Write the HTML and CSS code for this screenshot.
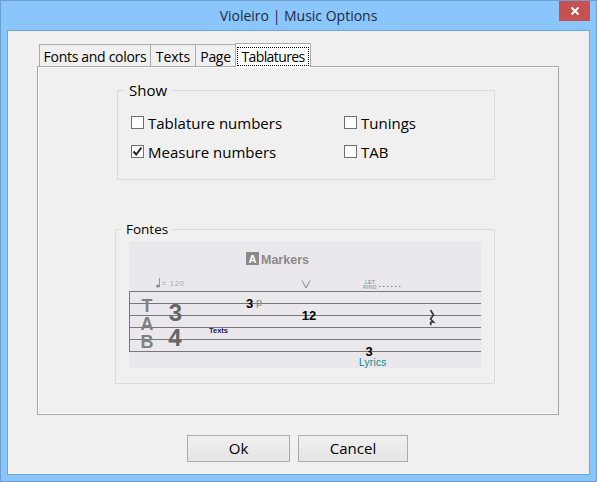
FILE: index.html
```html
<!DOCTYPE html>
<html lang="en">

<head>
  <meta charset="UTF-8">
  <meta name="viewport" content="width=device-width, initial-scale=1.0">
  <title>Violeiro | Music Options</title>
  <link rel="stylesheet" href="styles.css">
</head>

<body>
  <div class="window">
    <div class="titlebar">
      <span class="title">Violeiro | Music Options</span>
      <div class="close-button">
        <svg width="10" height="10" viewBox="0 0 10 10">
          <path d="M1.5 1.5 L8.5 8.5 M8.5 1.5 L1.5 8.5" stroke="#fff" stroke-width="2" fill="none"/>
        </svg>
      </div>
    </div>

    <div class="client">
      <div class="tabs">
        <div class="tab tab-fonts">Fonts and colors</div>
        <div class="tab tab-texts">Texts</div>
        <div class="tab tab-page">Page</div>
        <div class="tab tab-active"><span class="tab-focus">Tablatures</span></div>
      </div>

      <div class="pane">
        <fieldset class="group group-show">
          <legend>Show</legend>
          <div class="options">
            <div class="option"><span class="box"></span>Tablature numbers</div>
            <div class="option"><span class="box"></span>Tunings</div>
            <div class="option">
              <span class="box">
                <svg width="11" height="11" viewBox="0 0 11 11">
                  <path d="M1.5 5.5 L4.2 8.5 L9.5 1.5" stroke="#222" stroke-width="2" fill="none"/>
                </svg>
              </span>Measure numbers
            </div>
            <div class="option"><span class="box"></span>TAB</div>
          </div>
        </fieldset>

        <fieldset class="group group-fonts">
          <legend>Fontes</legend>
          <svg class="score" width="352" height="127" viewBox="0 0 352 127">
            <!-- staff -->
            <g stroke="#77767a" stroke-width="1">
              <path d="M0 50.5 H352 M0 62.5 H352 M0 74.5 H352 M0 86.5 H352 M0 98.5 H352 M0 110.5 H352"/>
              <path d="M0.5 50 V111"/>
            </g>

            <!-- marker -->
            <rect x="117" y="11" width="13" height="13" fill="#8a8a8a"/>
            <text x="123.5" y="22" class="marker-a" text-anchor="middle">A</text>
            <text x="132" y="23" class="marker">Markers</text>

            <!-- tempo -->
            <path d="M30.5 37 V45" stroke="#9a9a9a" stroke-width="1"/>
            <ellipse cx="29" cy="45" rx="2" ry="1.5" fill="#8a8a8a"/>
            <text x="33" y="45" class="tiny">= 120</text>

            <path d="M173 39.5 L177 47 L181 39.5" stroke="#888" stroke-width="1" fill="none"/>

            <text x="236" y="43" class="let-ring">LET</text>
            <text x="234" y="48" class="let-ring">RING</text>
            <path d="M250 45.5 H274" stroke="#888" stroke-width="1" stroke-dasharray="1.5 2.5"/>

            <!-- clef and time signature -->
            <text x="18" y="71" class="clef" text-anchor="middle">T</text>
            <text x="18" y="89" class="clef" text-anchor="middle">A</text>
            <text x="18" y="107" class="clef" text-anchor="middle">B</text>
            <text x="46.5" y="80" class="time" text-anchor="middle">3</text>
            <text x="46" y="105" class="time" text-anchor="middle">4</text>

            <!-- notes -->
            <text x="120.5" y="67" class="fret" text-anchor="middle">3</text>
            <text x="127" y="65" class="bend">p</text>
            <text x="180" y="79" class="fret" text-anchor="middle">12</text>
            <text x="80" y="92" class="texts">Texts</text>
            <text x="240" y="115" class="fret" text-anchor="middle">3</text>
            <text x="230" y="124.5" class="lyrics">Lyrics</text>

            <!-- rest -->
            <path d="M301.5 69 L304.5 74 L301.5 78 L304.5 81 C301.5 80.5 300.5 82.5 302.5 84" stroke="#333" stroke-width="1.6" fill="none"/>
          </svg>
        </fieldset>
      </div>

      <div class="buttons">
        <button class="button-ok">Ok</button>
        <button class="button-cancel">Cancel</button>
      </div>
    </div>
  </div>
</body>

</html>
```

FILE: styles.css
```css
* {
  box-sizing: border-box;
}

body {
  margin: 0;
  font-family: "Open Sans", Arial, sans-serif;
  font-size: 15px;
  color: #000;
}

.window {
  width: 597px;
  height: 482px;
  background-color: #8ac5fb;
  border: 1px solid #6f9fcf;
  padding: 0 6px 6px;
  overflow: hidden;
}

.titlebar {
  position: relative;
  height: 29px;
  display: flex;
  align-items: center;
  justify-content: center;
}

.title {
  font-size: 14px;
  color: #1c2b45;
}

.close-button {
  position: absolute;
  top: 0;
  right: 0;
  width: 31px;
  height: 20px;
  background-color: #c75050;
  display: flex;
  align-items: center;
  justify-content: center;
}

.client {
  height: 445px;
  background-color: #f0f0f0;
  border: 1px solid #6fa6d6;
  padding: 12px 30px 0 29px;
}

.tabs {
  display: flex;
  align-items: flex-end;
  height: 24px;
  margin-left: 2px;
  position: relative;
  z-index: 1;
  font-size: 14px;
}

.tab {
  height: 22px;
  margin-bottom: 1px;
  padding-top: 2px;
  border: 1px solid #acacac;
  border-bottom: none;
  border-left-width: 0;
  background-color: #f0f0f0;
  display: flex;
  align-items: center;
  justify-content: center;
  white-space: nowrap;
}

.tab-fonts {
  width: 112px;
  border-left-width: 1px;
  letter-spacing: -0.3px;
}

.tab-texts {
  width: 45px;
}

.tab-page {
  width: 40px;
  letter-spacing: -0.3px;
}

.tab-active {
  width: 76px;
  height: 24px;
  margin-left: -1px;
  margin-bottom: 0;
  border-left-width: 1px;
  background-color: #fff;
  padding: 2px 1px 0;
  letter-spacing: -0.6px;
}

.tab-focus {
  display: block;
  width: 100%;
  text-align: center;
  line-height: 19px;
  outline: 1px dotted #000;
  outline-offset: -1px;
}

.pane {
  height: 349px;
  margin-top: -1px;
  border: 1px solid #a9a9a9;
  box-shadow: inset 1px 1px 0 #fff, inset 0 -1px 0 #fff;
  padding-left: 79px;
  display: flex;
  flex-direction: column;
  align-items: flex-start;
}

.group {
  margin: 0;
  border: 1px solid #dcdcdc;
  min-width: 0;
}

.group legend {
  padding: 0 4px;
  line-height: 20px;
}

.group-show {
  width: 378px;
  height: 100px;
  margin-top: 13px;
  padding: 8px 13px 0;
}

.group-show legend {
  margin-left: -6px;
}

.group-fonts {
  width: 380px;
  height: 165px;
  margin-top: 39px;
  margin-left: -2px;
  padding: 2px 13px 0;
}

.group-fonts legend {
  margin-left: -7px;
  font-size: 13.5px;
}

.options {
  display: grid;
  grid-template-columns: 213px 1fr;
  grid-auto-rows: 29px;
}

.option {
  display: flex;
  align-items: center;
}

.box {
  width: 13px;
  height: 13px;
  margin-right: 4px;
  border: 1px solid #707070;
  background-color: #fff;
  display: flex;
  align-items: center;
  justify-content: center;
}

.score {
  display: block;
  background-color: #eae8ed;
}

.score text {
  font-family: "Liberation Sans", Arial, sans-serif;
}

.score .marker-a {
  font-size: 11px;
  font-weight: bold;
  fill: #fff;
}

.score .marker {
  font-size: 12.5px;
  font-weight: bold;
  fill: #8a8a8a;
}

.score .tiny {
  font-size: 7px;
  letter-spacing: 1px;
  fill: #a0a0a0;
}

.score .let-ring {
  font-size: 5.5px;
  fill: #888;
}

.score .clef {
  font-size: 18px;
  font-weight: bold;
  fill: #808080;
}

.score .time {
  font-size: 24px;
  font-weight: bold;
  fill: #666;
}

.score .fret {
  font-size: 13px;
  font-weight: bold;
  fill: #000;
}

.score .bend {
  font-size: 11px;
  fill: #888;
}

.score .texts {
  font-size: 7.5px;
  font-weight: bold;
  fill: #1a1a66;
}

.score .lyrics {
  font-size: 10px;
  letter-spacing: 0.3px;
  fill: #008b8b;
}

.buttons {
  display: flex;
  justify-content: center;
  gap: 8px;
  margin-top: 20px;
  padding-right: 1px;
}

button {
  height: 27px;
  font-family: inherit;
  font-size: 15px;
  line-height: 22px;
  padding: 0 0 2px;
  color: #000;
  border: 1px solid #acacac;
  background: linear-gradient(#f0f0f0, #e5e5e5);
}

.button-ok {
  width: 103px;
}

.button-cancel {
  width: 110px;
}
```
